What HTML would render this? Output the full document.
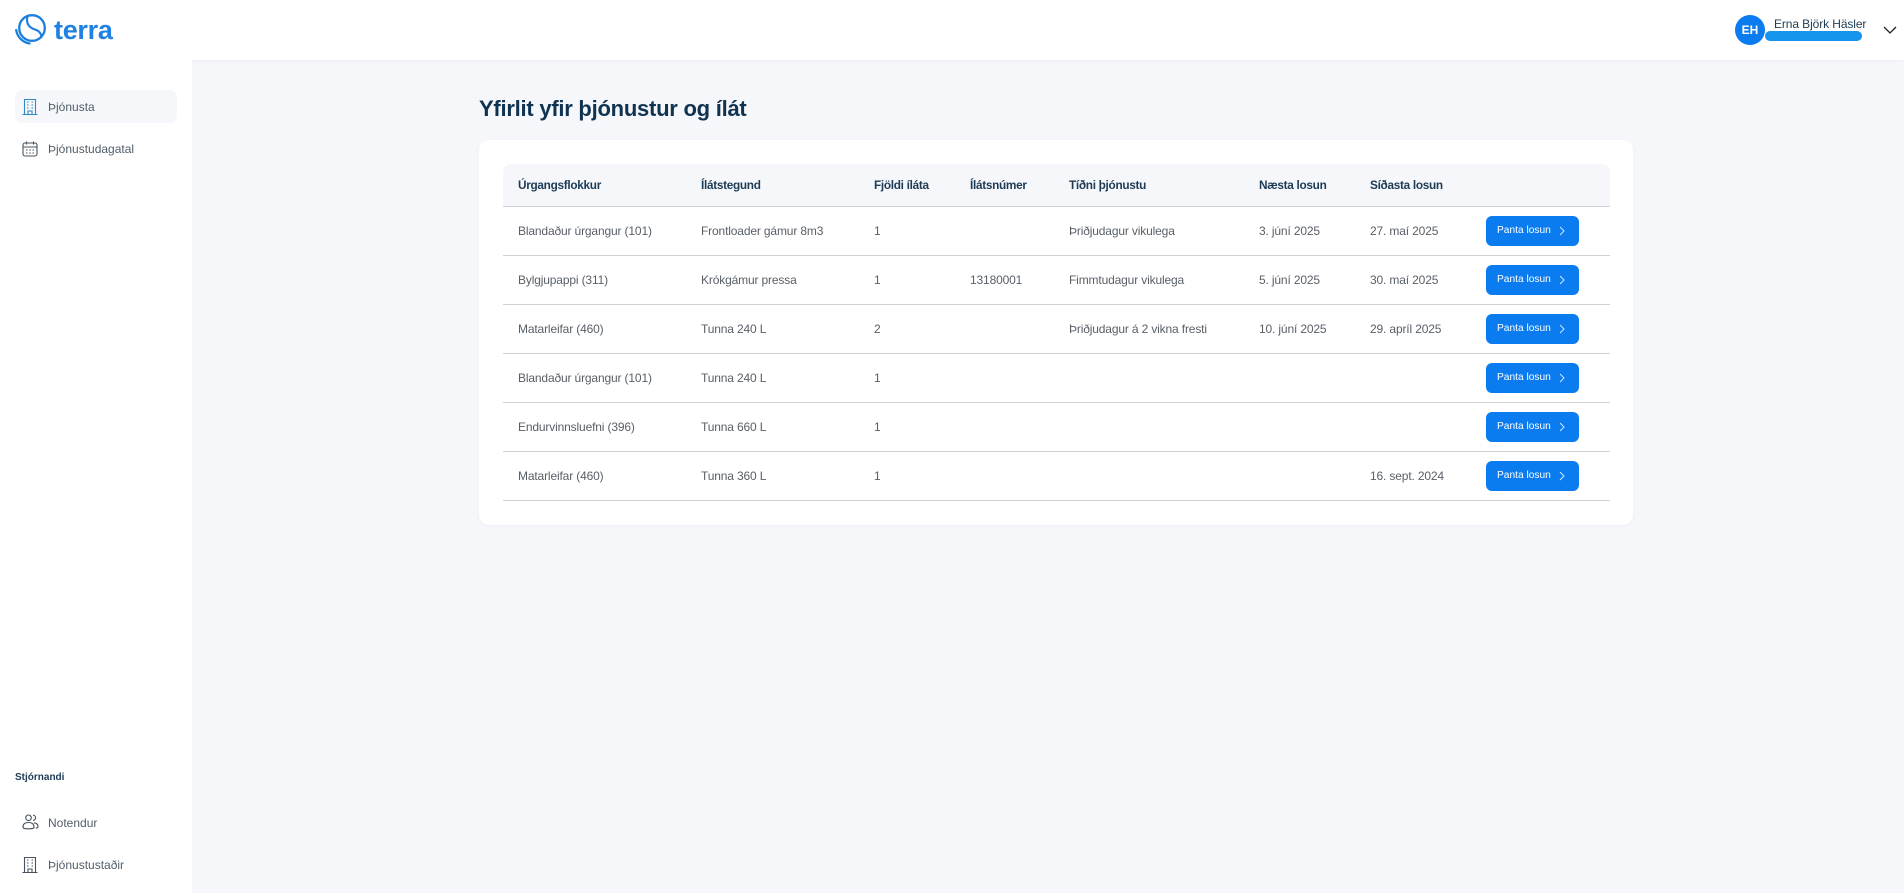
<!DOCTYPE html>
<html lang="is"><head><meta charset="utf-8"><title>Terra</title>
<style>
*{box-sizing:border-box}
html,body{margin:0;padding:0;width:1904px;height:893px;overflow:hidden;background:#f6f7fb;font-family:"Liberation Sans",sans-serif;color:#4a5560}
.a{position:absolute;white-space:nowrap}
#top{position:absolute;left:0;top:0;width:1904px;height:60px;background:#fff;box-shadow:0 1px 4px rgba(30,50,80,.04)}
#side{position:absolute;left:0;top:60px;width:192px;height:833px;background:#fff}
.nav{font-size:12px;color:#525e69;line-height:16px}
#card{position:absolute;left:479px;top:140px;width:1154px;height:385px;background:#fff;border-radius:10px;box-shadow:0 1px 3px rgba(30,50,80,.04)}
#thead{position:absolute;left:503px;top:164px;width:1107px;height:42px;background:#f6f7fb;border-radius:8px 8px 0 0}
.l{position:absolute;left:503px;width:1107px;height:1px;background:#cfd3d9}
.th{font-size:11.8px;font-weight:700;letter-spacing:-.3px;color:#1d3b55;line-height:16px;top:177px}
.td{font-size:12px;letter-spacing:-.15px;color:#585f67;line-height:16px}
.btn{position:absolute;left:1486px;width:93px;height:30px;background:#0a7cf0;border-radius:6px;color:#fff;font-size:10.2px;line-height:29.500px;padding-left:11px}
.btn svg{position:absolute;left:73px;top:10px}
</style></head><body>
<div id="top"></div>
<div id="side"></div>

<svg class="a" style="left:0;top:0" width="60" height="50" viewBox="0 0 60 50" fill="none" stroke="#1b7fe0">
<circle cx="32" cy="28" r="12.800" stroke-width="2.300"/>
<path d="M16.200 30A16 16 0 0 0 29.500 43.500" stroke-width="2.300" stroke-linecap="round"/>
<path d="M27.500 16.500C25.500 24 30 28 35 29.500C40 31 42 35 41 38" stroke-width="2.100"/>
</svg>
<div class="a" style="left:54px;top:11px;font-size:27px;line-height:38px;font-weight:700;color:#1f82e2;letter-spacing:-.3px">terra</div>

<div class="a" style="left:1735px;top:15px;width:30px;height:30px;border-radius:50%;background:#0a7cf0;color:#fff;font-size:12px;font-weight:700;line-height:30px;text-align:center">EH</div>
<div class="a" style="left:1774px;top:16px;font-size:12px;letter-spacing:-.1px;line-height:16px;color:#1d3b55">Erna Björk Häsler</div>
<div class="a" style="left:1765px;top:31px;width:97px;height:10px;border-radius:5px;background:#1594ec"></div>
<svg class="a" style="left:1883px;top:26px" width="14" height="9" viewBox="0 0 14 9" fill="none" stroke="#222" stroke-width="1.300"><path d="M1 1l6 6 6-6"/></svg>

<div class="a" style="left:15px;top:90px;width:162px;height:33px;background:#f6f7fb;border-radius:7px"></div>
<svg class="a" style="left:22px;top:98px" width="16" height="18" viewBox="0 0 16 18" fill="none" stroke="#2f8ac4" stroke-width="1.100"><path d="M2.500 16.500V1.500h11v15M.5 16.500h15M6 16.500v-3.500h4v3.500M5 4h1.500M9.500 4H11M5 7h1.500M9.500 7H11M5 10h1.500M9.500 10H11"/></svg>
<div class="a nav" style="left:48px;top:99px">Þjónusta</div>
<svg class="a" style="left:22px;top:141px" width="16" height="16" viewBox="0 0 16 16" fill="none" stroke="#46535f" stroke-width="1.100"><rect x="1" y="2" width="14" height="13" rx="2"/><path d="M1 6h14M4.500 .5v3M11.500 .5v3M4 9h1.500M7.300 9h1.500M10.500 9H12M4 12h1.500M7.300 12h1.500M10.500 12H12"/></svg>
<div class="a nav" style="left:48px;top:141px">Þjónustudagatal</div>

<div class="a" style="left:15px;top:771px;font-size:10px;line-height:14px;font-weight:700;color:#1d3b55">Stjórnandi</div>
<svg class="a" style="left:22px;top:814px" width="17" height="16" viewBox="0 0 17 16" fill="none" stroke="#46535f" stroke-width="1.100"><circle cx="6.500" cy="3.800" r="2.800"/><path d="M11 1.200a2.600 2.600 0 0 1 0 5.200M1 13c0-3 2-4.500 5.500-4.500S12 10 12 13c0 1.500-1.500 1.800-5.500 1.800S1 14.500 1 13zM12 8.800c2.500.4 4 1.800 4 3.700 0 1-.8 1.500-2.300 1.700"/></svg>
<div class="a nav" style="left:48px;top:815px">Notendur</div>
<svg class="a" style="left:22px;top:856px" width="16" height="18" viewBox="0 0 16 18" fill="none" stroke="#46535f" stroke-width="1.100"><path d="M2.500 16.500V1.500h11v15M.5 16.500h15M6 16.500v-3.500h4v3.500M5 4h1.500M9.500 4H11M5 7h1.500M9.500 7H11M5 10h1.500M9.500 10H11"/></svg>
<div class="a nav" style="left:48px;top:857px">Þjónustustaðir</div>

<div class="a" style="left:479px;top:94px;font-size:22px;letter-spacing:-.25px;line-height:30px;font-weight:700;color:#0f3350">Yfirlit yfir þjónustur og ílát</div>

<div id="card"></div>
<div id="thead"></div>
<div class="l" style="top:206px"></div>
<div class="l" style="top:255px"></div>
<div class="l" style="top:304px"></div>
<div class="l" style="top:353px"></div>
<div class="l" style="top:402px"></div>
<div class="l" style="top:451px"></div>
<div class="l" style="top:500px"></div>

<div class="a th" style="left:518px">Úrgangsflokkur</div>
<div class="a th" style="left:701px">Ílátstegund</div>
<div class="a th" style="left:874px">Fjöldi íláta</div>
<div class="a th" style="left:970px">Ílátsnúmer</div>
<div class="a th" style="left:1069px">Tíðni þjónustu</div>
<div class="a th" style="left:1259px">Næsta losun</div>
<div class="a th" style="left:1370px">Síðasta losun</div>

<div class="a td" style="left:518px;top:223px">Blandaður úrgangur (101)</div>
<div class="a td" style="left:701px;top:223px">Frontloader gámur 8m3</div>
<div class="a td" style="left:874px;top:223px">1</div>
<div class="a td" style="left:1069px;top:223px">Þriðjudagur vikulega</div>
<div class="a td" style="left:1259px;top:223px">3. júní 2025</div>
<div class="a td" style="left:1370px;top:223px">27. maí 2025</div>
<div class="btn" style="top:216px">Panta losun<svg width="6" height="10" viewBox="0 0 6 10" fill="none" stroke="#cfe6ff" stroke-width="1"><path d="M1 1l4 4-4 4"/></svg></div>

<div class="a td" style="left:518px;top:272px">Bylgjupappi (311)</div>
<div class="a td" style="left:701px;top:272px">Krókgámur pressa</div>
<div class="a td" style="left:874px;top:272px">1</div>
<div class="a td" style="left:970px;top:272px">13180001</div>
<div class="a td" style="left:1069px;top:272px">Fimmtudagur vikulega</div>
<div class="a td" style="left:1259px;top:272px">5. júní 2025</div>
<div class="a td" style="left:1370px;top:272px">30. maí 2025</div>
<div class="btn" style="top:265px">Panta losun<svg width="6" height="10" viewBox="0 0 6 10" fill="none" stroke="#cfe6ff" stroke-width="1"><path d="M1 1l4 4-4 4"/></svg></div>

<div class="a td" style="left:518px;top:321px">Matarleifar (460)</div>
<div class="a td" style="left:701px;top:321px">Tunna 240 L</div>
<div class="a td" style="left:874px;top:321px">2</div>
<div class="a td" style="left:1069px;top:321px">Þriðjudagur á 2 vikna fresti</div>
<div class="a td" style="left:1259px;top:321px">10. júní 2025</div>
<div class="a td" style="left:1370px;top:321px">29. apríl 2025</div>
<div class="btn" style="top:314px">Panta losun<svg width="6" height="10" viewBox="0 0 6 10" fill="none" stroke="#cfe6ff" stroke-width="1"><path d="M1 1l4 4-4 4"/></svg></div>

<div class="a td" style="left:518px;top:370px">Blandaður úrgangur (101)</div>
<div class="a td" style="left:701px;top:370px">Tunna 240 L</div>
<div class="a td" style="left:874px;top:370px">1</div>
<div class="btn" style="top:363px">Panta losun<svg width="6" height="10" viewBox="0 0 6 10" fill="none" stroke="#cfe6ff" stroke-width="1"><path d="M1 1l4 4-4 4"/></svg></div>

<div class="a td" style="left:518px;top:419px">Endurvinnsluefni (396)</div>
<div class="a td" style="left:701px;top:419px">Tunna 660 L</div>
<div class="a td" style="left:874px;top:419px">1</div>
<div class="btn" style="top:412px">Panta losun<svg width="6" height="10" viewBox="0 0 6 10" fill="none" stroke="#cfe6ff" stroke-width="1"><path d="M1 1l4 4-4 4"/></svg></div>

<div class="a td" style="left:518px;top:468px">Matarleifar (460)</div>
<div class="a td" style="left:701px;top:468px">Tunna 360 L</div>
<div class="a td" style="left:874px;top:468px">1</div>
<div class="a td" style="left:1370px;top:468px">16. sept. 2024</div>
<div class="btn" style="top:461px">Panta losun<svg width="6" height="10" viewBox="0 0 6 10" fill="none" stroke="#cfe6ff" stroke-width="1"><path d="M1 1l4 4-4 4"/></svg></div>
</body></html>
